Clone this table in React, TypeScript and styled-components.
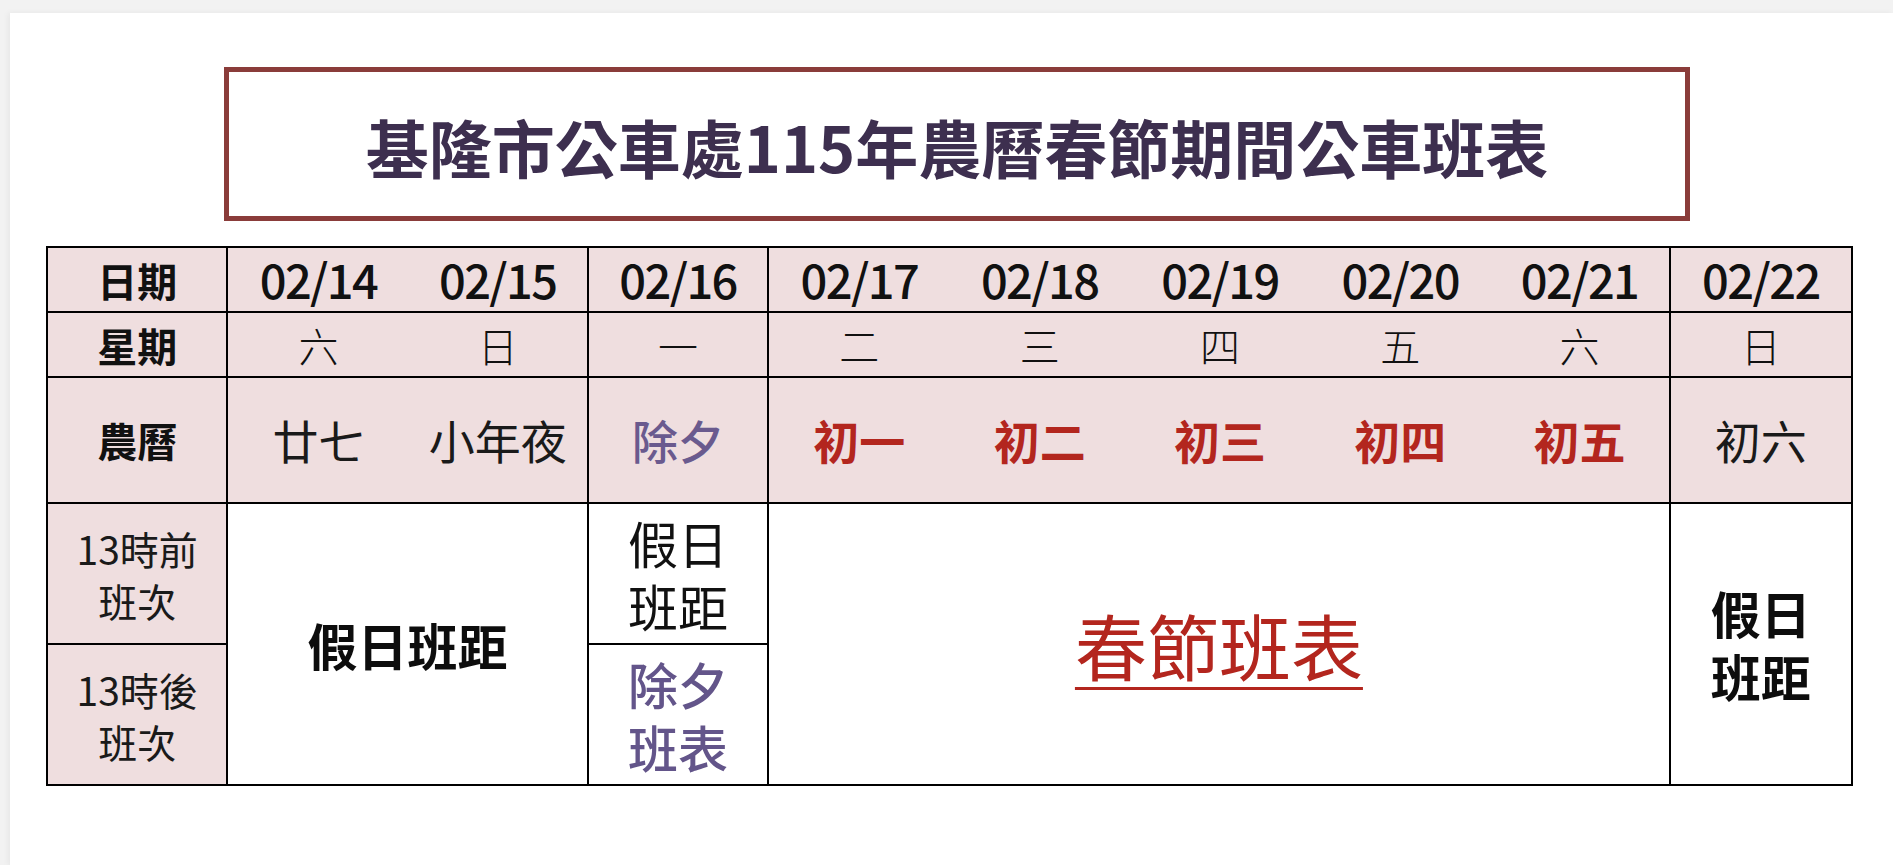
import React from "react";
import styled, { createGlobalStyle, css } from "styled-components";

const Global = createGlobalStyle`
  html, body { margin: 0; padding: 0; }
  body {
    background: #f2f2f2;
    font-family: "Noto Sans CJK TC", "Noto Sans CJK SC", "Noto Sans", sans-serif;
    overflow: hidden;
  }
`;

const Page = styled.div`
  width: 1893px;
  height: 865px;
  box-sizing: border-box;
  padding: 13px 0 0 10px;
`;

const Card = styled.main`
  background: #ffffff;
  height: 852px;
  box-sizing: border-box;
  padding: 54px 0 0 36px;
  box-shadow: -2px 0 6px rgba(0, 0, 0, 0.05);
  display: flex;
  flex-direction: column;
`;

const TitleBox = styled.header`
  margin-left: 178px;
  width: 1466px;
  height: 154px;
  box-sizing: border-box;
  border: 5px solid #8a3c3a;
  display: flex;
  align-items: center;
  justify-content: center;
`;

const Title = styled.h1`
  margin: 0;
  font-size: 63px;
  font-weight: 600;
  color: #3d2f4f;
  letter-spacing: 0;
  line-height: 1;
  padding-top: 2px;
`;

const Table = styled.section`
  margin-top: 25px;
  width: 1807px;
  box-sizing: border-box;
  border: 2px solid #000;
  display: grid;
  grid-template-columns: repeat(10, 1fr);
  grid-template-rows: 65px 65px 126px 141px 139px;
`;

type Variant =
  | "label"
  | "date"
  | "week"
  | "lunar"
  | "lunarEve"
  | "lunarHoliday"
  | "time"
  | "bodyBold"
  | "body"
  | "bodyEve"
  | "spring";

const variants: Record<Variant, ReturnType<typeof css>> = {
  label: css`
    font-size: 40px;
    font-weight: 700;
    color: #111;
  `,
  date: css`
    font-size: 47px;
    font-weight: 500;
    letter-spacing: -1.6px;
    color: #111;
  `,
  week: css`
    font-size: 40px;
    font-weight: 300;
    color: #111;
  `,
  lunar: css`
    font-size: 46px;
    font-weight: 400;
    color: #1a1a1a;
  `,
  lunarEve: css`
    font-size: 46px;
    font-weight: 500;
    color: #6a5a8e;
  `,
  lunarHoliday: css`
    font-size: 46px;
    font-weight: 700;
    color: #b3261e;
  `,
  time: css`
    font-size: 39px;
    font-weight: 400;
    line-height: 52px;
    color: #1a1a1a;
  `,
  bodyBold: css`
    font-size: 50px;
    font-weight: 700;
    line-height: 63px;
    color: #0d0d0d;
  `,
  body: css`
    font-size: 50px;
    font-weight: 400;
    line-height: 63px;
    color: #111;
  `,
  bodyEve: css`
    font-size: 50px;
    font-weight: 500;
    line-height: 63px;
    color: #63558a;
  `,
  spring: css`
    font-size: 72px;
    font-weight: 400;
    color: #b3261e;
    text-decoration: underline;
    text-decoration-thickness: 3px;
    text-underline-offset: 12px;
  `,
};

const Cell = styled.div<{
  $col: number;
  $span?: number;
  $row: number;
  $rows?: number;
  $pink?: boolean;
  $right?: boolean;
  $bottom?: boolean;
  $v: Variant;
}>`
  grid-column: ${(p) => p.$col} / span ${(p) => p.$span ?? 1};
  grid-row: ${(p) => p.$row} / span ${(p) => p.$rows ?? 1};
  box-sizing: border-box;
  display: flex;
  align-items: center;
  justify-content: center;
  text-align: center;
  white-space: pre-line;
  line-height: 1.2;
  background: ${(p) => (p.$pink ? "#efdedf" : "#ffffff")};
  border-right: ${(p) => (p.$right ? "2px solid #000" : "none")};
  border-bottom: ${(p) => (p.$bottom ? "2px solid #000" : "none")};
  ${(p) => variants[p.$v]}
`;

type CellDef = {
  col: number;
  span?: number;
  row: number;
  rows?: number;
  pink?: boolean;
  right?: boolean;
  bottom?: boolean;
  v: Variant;
  text: string;
};

// group edges (vertical rules) after columns 1, 3, 4 and 9
const groupEnd = new Set([1, 3, 4, 9]);

const dates = ["02/14", "02/15", "02/16", "02/17", "02/18", "02/19", "02/20", "02/21", "02/22"];
const weeks = ["六", "日", "一", "二", "三", "四", "五", "六", "日"];
const lunars: { t: string; v: Variant }[] = [
  { t: "廿七", v: "lunar" },
  { t: "小年夜", v: "lunar" },
  { t: "除夕", v: "lunarEve" },
  { t: "初一", v: "lunarHoliday" },
  { t: "初二", v: "lunarHoliday" },
  { t: "初三", v: "lunarHoliday" },
  { t: "初四", v: "lunarHoliday" },
  { t: "初五", v: "lunarHoliday" },
  { t: "初六", v: "lunar" },
];

const headerCells: CellDef[] = [
  { col: 1, row: 1, pink: true, right: true, bottom: true, v: "label", text: "日期" },
  { col: 1, row: 2, pink: true, right: true, bottom: true, v: "label", text: "星期" },
  { col: 1, row: 3, pink: true, right: true, bottom: true, v: "label", text: "農曆" },
  ...dates.map((d, i) => ({ col: i + 2, row: 1, pink: true, right: groupEnd.has(i + 2), bottom: true, v: "date" as Variant, text: d })),
  ...weeks.map((d, i) => ({ col: i + 2, row: 2, pink: true, right: groupEnd.has(i + 2), bottom: true, v: "week" as Variant, text: d })),
  ...lunars.map((d, i) => ({ col: i + 2, row: 3, pink: true, right: groupEnd.has(i + 2), bottom: true, v: d.v, text: d.t })),
];

const bodyCells: CellDef[] = [
  { col: 1, row: 4, pink: true, right: true, bottom: true, v: "time", text: "13時前\n班次" },
  { col: 1, row: 5, pink: true, right: true, v: "time", text: "13時後\n班次" },
  { col: 2, span: 2, row: 4, rows: 2, right: true, v: "bodyBold", text: "假日班距" },
  { col: 4, row: 4, right: true, bottom: true, v: "body", text: "假日\n班距" },
  { col: 4, row: 5, right: true, v: "bodyEve", text: "除夕\n班表" },
  { col: 5, span: 5, row: 4, rows: 2, right: true, v: "spring", text: "春節班表" },
  { col: 10, row: 4, rows: 2, v: "bodyBold", text: "假日\n班距" },
];

export default function App() {
  const cells = [...headerCells, ...bodyCells];
  return (
    <>
      <Global />
      <Page>
        <Card>
          <TitleBox>
            <Title>基隆市公車處115年農曆春節期間公車班表</Title>
          </TitleBox>
          <Table>
            {cells.map((c, i) => (
              <Cell
                key={i}
                $col={c.col}
                $span={c.span}
                $row={c.row}
                $rows={c.rows}
                $pink={c.pink}
                $right={c.right}
                $bottom={c.bottom}
                $v={c.v}
              >
                {c.text}
              </Cell>
            ))}
          </Table>
        </Card>
      </Page>
    </>
  );
}
